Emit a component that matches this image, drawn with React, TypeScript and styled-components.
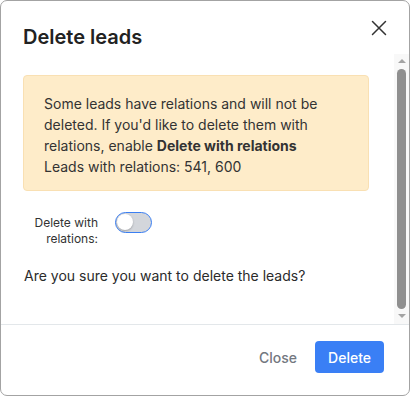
import React, { useState } from 'react';
import styled, { createGlobalStyle } from 'styled-components';

const GlobalStyle = createGlobalStyle`
  html, body {
    margin: 0;
    padding: 0;
    background: #ffffff;
  }
  body {
    font-family: Inter, "Noto Sans", sans-serif;
    color: #2b2b2b;
  }
`;

const Modal = styled.div`
  box-sizing: border-box;
  width: 410px;
  height: 396px;
  border: 1px solid #a3a3a3;
  border-radius: 7px;
  background: #fff;
  display: flex;
  flex-direction: column;
  overflow: hidden;
`;

const Header = styled.div`
  height: 53px;
  flex-shrink: 0;
  display: flex;
  align-items: center;
  justify-content: space-between;
  padding: 0 16px 0 22px;
  position: relative;
`;

const Title = styled.h2`
  margin: 0;
  padding-top: 19px;
  font-size: 20px;
  font-weight: 600;
  color: #222;
`;

const CloseIcon = styled.button`
  position: absolute;
  top: 13px;
  right: 16px;
  width: 28px;
  height: 28px;
  padding: 0;
  border: none;
  background: transparent;
  display: flex;
  align-items: center;
  justify-content: center;
  cursor: pointer;
`;

const Body = styled.div`
  flex: 1;
  min-height: 0;
  display: flex;
`;

const Content = styled.div`
  flex: 1;
  overflow: hidden;
  padding: 21px 25px 0 22px;
`;

/* drawn scrollbar: the headless browser hides native ones */
const ScrollTrack = styled.div`
  width: 15px;
  flex-shrink: 0;
  background: #f8f8f8;
  display: flex;
  flex-direction: column;
  align-items: center;
`;

const Arrow = styled.div<{ $down?: boolean }>`
  height: 15px;
  width: 15px;
  display: flex;
  justify-content: center;
  align-items: ${(p) => (p.$down ? 'flex-start' : 'flex-end')};
  padding: ${(p) => (p.$down ? '5px 0 0' : '0 0 6px')};
  box-sizing: border-box;

  &::before {
    content: '';
    width: 0;
    height: 0;
    border-left: 4px solid transparent;
    border-right: 4px solid transparent;
    ${(p) => (p.$down ? 'border-top: 4px solid #a3a3a3;' : 'border-bottom: 4px solid #a3a3a3;')}
  }
`;

const Thumb = styled.div`
  flex: 1;
  width: 9px;
  margin: 0 1px 0 0;
  border-radius: 5px;
  background: #8f8f8f;
`;

const Alert = styled.div`
  background: #feecc9;
  border: 1px solid #f9e0b3;
  border-radius: 4px;
  padding: 17px 20px 13px 20px;
  font-size: 14px;
  line-height: 21px;
  color: #333;
`;

const Line = styled.div``;

const Row = styled.div`
  display: flex;
  align-items: flex-start;
  gap: 17px;
  margin-top: 21px;
  padding-left: 1px;
`;

const Label = styled.label`
  width: 74px;
  text-align: right;
  font-size: 12px;
  line-height: 16px;
  color: #333;
  margin-top: 3px;
`;

const Toggle = styled.button<{ $on: boolean }>`
  box-sizing: border-box;
  width: 37px;
  height: 21px;
  border-radius: 11px;
  border: 1.5px solid #3b7ff2;
  background: ${(p) => (p.$on ? '#3b7ff2' : '#d3d6db')};
  padding: 0;
  position: relative;
  cursor: pointer;
`;

const Knob = styled.span<{ $on: boolean }>`
  position: absolute;
  top: 1px;
  left: ${(p) => (p.$on ? '17px' : '1px')};
  width: 16px;
  height: 16px;
  border-radius: 50%;
  background: #fff;
  box-shadow: 0 1px 2px rgba(0, 0, 0, 0.25);
`;

const Question = styled.p`
  margin: 18px 0 0 1px;
  font-size: 14px;
  line-height: 21px;
  color: #2b2b2b;
`;

const Footer = styled.div`
  flex-shrink: 0;
  border-top: 1px solid #e3e7ea;
  display: flex;
  justify-content: flex-end;
  align-items: center;
  gap: 2px;
  padding: 16px 25px 22px;
`;

const Button = styled.button<{ $primary?: boolean }>`
  height: 32px;
  padding: 0 ${(p) => (p.$primary ? '13px' : '16px')};
  border: none;
  border-radius: 4px;
  font-family: Inter, "Noto Sans", sans-serif;
  font-size: 14px;
  font-weight: 500;
  cursor: pointer;
  background: ${(p) => (p.$primary ? '#3a7ff5' : 'transparent')};
  color: ${(p) => (p.$primary ? '#fff' : '#737780')};
`;

export default function App() {
  const [withRelations, setWithRelations] = useState(false);

  return (
    <>
      <GlobalStyle />
      <Modal>
        <Header>
          <Title>Delete leads</Title>
          <CloseIcon aria-label="Close">
            <svg width="16" height="16" viewBox="0 0 16 16">
              <path d="M1.5 1.5 L14.5 14.5 M14.5 1.5 L1.5 14.5" stroke="#333" strokeWidth="1.5" strokeLinecap="round" />
            </svg>
          </CloseIcon>
        </Header>
        <Body>
          <Content>
            <Alert>
              <Line>Some leads have relations and will not be</Line>
              <Line>deleted. If you'd like to delete them with</Line>
              <Line>
                relations, enable <b>Delete with relations</b>
              </Line>
              <Line>Leads with relations: 541, 600</Line>
            </Alert>
            <Row>
              <Label>Delete with relations:</Label>
              <Toggle $on={withRelations} onClick={() => setWithRelations(!withRelations)}>
                <Knob $on={withRelations} />
              </Toggle>
            </Row>
            <Question>Are you sure you want to delete the leads?</Question>
          </Content>
          <ScrollTrack>
            <Arrow />
            <Thumb />
            <Arrow $down />
          </ScrollTrack>
        </Body>
        <Footer>
          <Button>Close</Button>
          <Button $primary>Delete</Button>
        </Footer>
      </Modal>
    </>
  );
}
